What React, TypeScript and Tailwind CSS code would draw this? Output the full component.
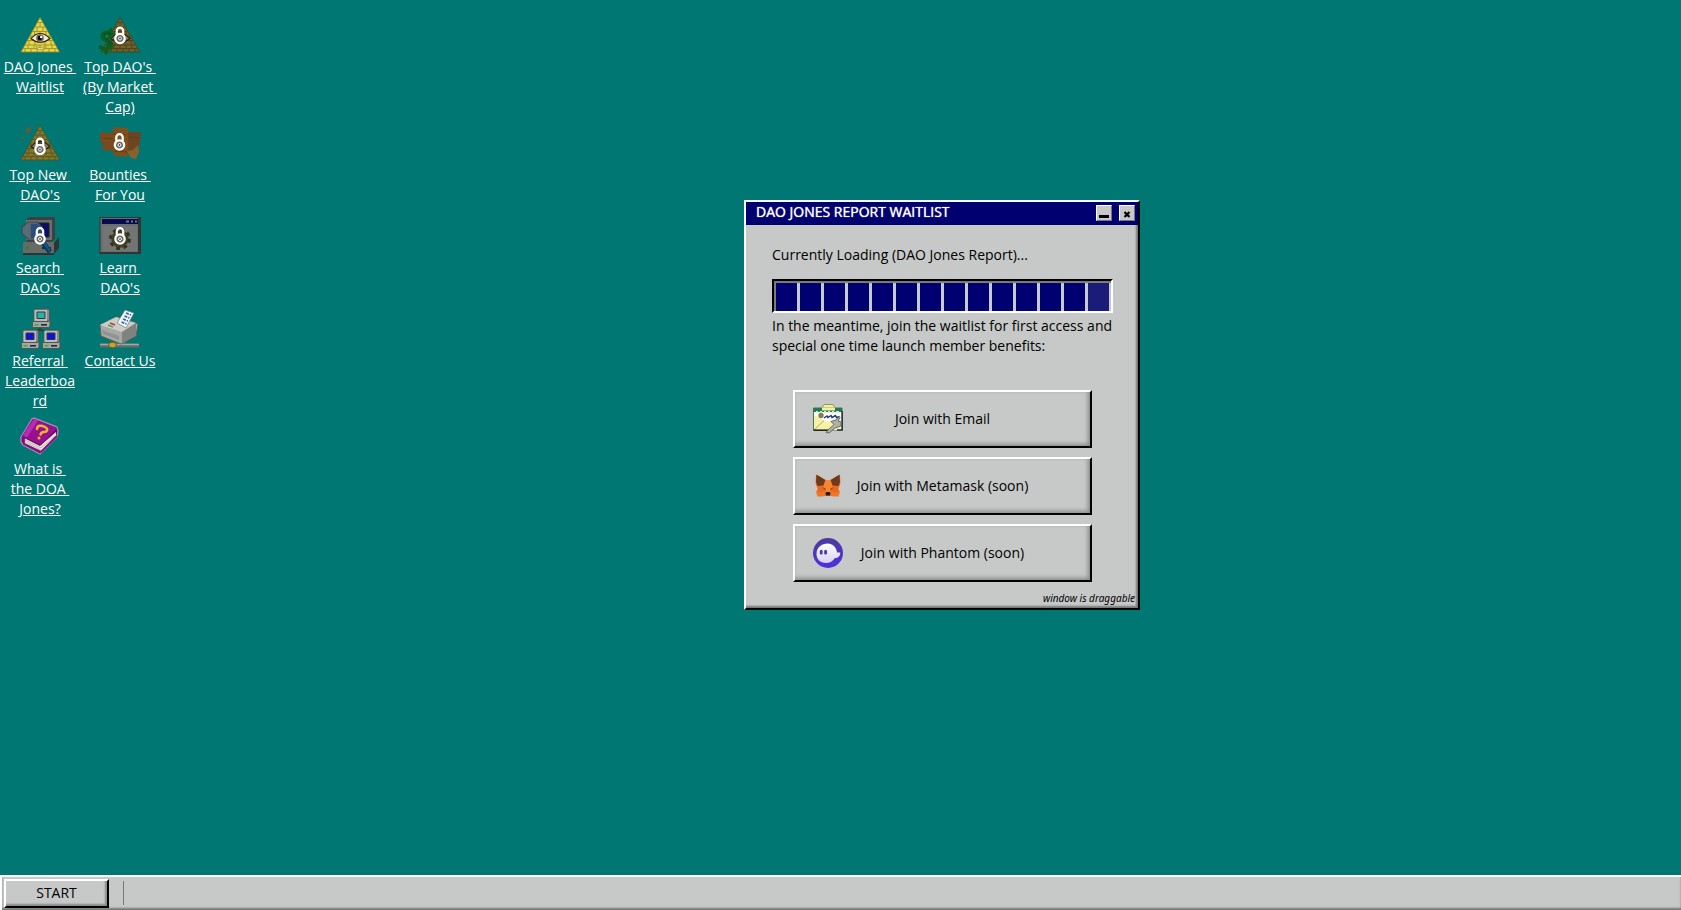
import type { ReactNode } from 'react';

type DesktopItem = { label: string; icon: ReactNode };

function Lock({ cx = 20, cy = 25 }: { cx?: number; cy?: number }) {
  return (
    <g transform={`translate(${cx} ${cy})`}>
      <path d="M-3.2 -3.500V-7.600a3.200 3.200 0 0 1 6.400 0V-3.500" fill="none" stroke="#fff" strokeWidth="2.200" />
      <circle r="4.700" fill="#6b6b64" stroke="#fff" strokeWidth="2.200" />
      <circle r="1.500" fill="#555" stroke="#fff" strokeWidth="1" />
    </g>
  );
}

function Pyramid({ fill, line, dark = false }: { fill: string; line: string; dark?: boolean }) {
  return (
    <g>
      <path d="M20 2.5 39.5 37H1Z" fill={fill} stroke={line} strokeWidth=".8" />
      <path
        d="M17.5 7.5h5M15 12h10M12.5 16.5h15M10 21h20M7.5 25.5h25M5 30h30M3 33.6h34M20 7.5V12M17 12v4.500M23 12v4.500M14.500 16.500v4.500M20 16.500v4.500M26 16.500v4.500M11 21v4.500M29 21v4.500M9 25.500v4.500M15 25.500v4.500M25 25.500v4.500M31 25.500v4.500M8 30v3.600M14 30v3.600M20 30v3.600M26 30v3.600M32 30v3.600M5 33.600V37M11 33.600V37M17 33.600V37M23 33.600V37M29 33.600V37M35 33.600V37"
        stroke={line}
        strokeWidth=".8"
        fill="none"
      />
      <path d="M11 23.500Q20 13.500 30 23.500Q20 31 11 23.500Z" fill={dark ? '#7b766f' : '#f3ead8'} stroke="#29230f" strokeWidth="1.100" />
      <circle cx="20" cy="23" r="3.800" fill={dark ? '#38342d' : '#6a6350'} />
      <circle cx="20" cy="23" r="2.200" fill="#0c0a04" />
      {!dark && <circle cx="21.200" cy="22" r="1.200" fill="#fff" />}
      {!dark && <path d="M16 31.500q5 3 9 0q-3 5-7 2.500Z" fill="#f7eeb8" stroke="#8c7a1f" strokeWidth=".6" />}
    </g>
  );
}

function DeskSvg({ children }: { children: ReactNode }) {
  return (
    <svg className="h-10 w-10 overflow-visible" viewBox="0 0 40 40" aria-hidden="true">
      {children}
    </svg>
  );
}

function MiniComputer({ x, y, screen }: { x: number; y: number; screen: string }) {
  return (
    <g transform={`translate(${x} ${y})`}>
      <path d="M2 1 3.500 0H16l1.500 1v11H2Z" fill="#858987" stroke="#4d5150" strokeWidth=".8" />
      <path d="M2.500 1h12.500v11H2.500Z" fill="#b9bbb8" />
      <path d="M5 3h8v6.500H5Z" fill={screen} stroke="#343838" strokeWidth="1" />
      <path d="M0.500 12.500h16l1.500-1V17l-1.500 1.500H.5Z" fill="#a4a7a3" stroke="#4d5150" strokeWidth=".9" />
      <path d="M9 15.800h6" stroke="#222" strokeWidth="1.500" />
      <path d="M2.500 15.800h4" stroke="#38b14b" strokeWidth="1.700" />
    </g>
  );
}

const items: DesktopItem[] = [
  { label: 'DAO Jones Waitlist', icon: <DeskSvg><Pyramid fill="#e6d84b" line="#938624" /></DeskSvg> },
  {
    label: "Top DAO's (By Market Cap)",
    icon: (
      <DeskSvg>
        <Pyramid fill="#6f612a" line="#463e1d" dark />
        <g fill="none" stroke="#0b5f22" strokeLinecap="round">
          <path d="M12.500 20C10 15.500 2 17 2.500 22C3 26.500 12 25 11.500 30C11 34.500 4 35.500 .5 32" strokeWidth="4" />
          <path d="M11 14.500 6 38" strokeWidth="3" />
        </g>
        <path d="M11 19.500C8 17 4 18.500 4.500 21.500C5 24.500 11 25.500 10 29.500" fill="none" stroke="#0a401b" strokeWidth=".9" />
        <Lock cx={20} cy={23.500} />
      </DeskSvg>
    ),
  },
  {
    label: "Top New DAO's",
    icon: (
      <DeskSvg>
        <Pyramid fill="#81762a" line="#564f1f" dark />
        <path d="m4 8 3-2 1-3 1.500 3 2.500 1-2.500 1.500L8 11 7 8.500ZM1 15l2-1.500 1 1.500-1.500 2ZM11 3l1.500-1 .5 1.500-1 1Z" fill="#75552f" />
        <Lock cx={20} cy={26.500} />
      </DeskSvg>
    ),
  },
  {
    label: 'Bounties For You',
    icon: (
      <DeskSvg>
        <path d="m0 11 3-2 10 1 2 2v16L2 27l1-6-3-3Z" fill="#7a4a1f" />
        <path d="M27 9h13l1 2-1 7-1 5v7l-4 2-8-2Z" fill="#6d4520" />
        <path d="m13 5 2-1 13 1v23l-1 6-13-1-1-5Z" fill="#7f4f20" />
        <path d="m13 11 14 1M3 15l10 1M29 14l10 1M14 28l13 1" stroke="#633c15" strokeWidth="1" fill="none" />
        <path d="m27 28 6-1 5-5 1 7-3 7-5-1Z" fill="#8a612a" />
        <Lock cx={19.500} cy={22} />
      </DeskSvg>
    ),
  },
  {
    label: "Search DAO's",
    icon: (
      <DeskSvg>
        <path d="m7 2 3-1h25v22l-4 3H7Z" fill="#3c4040" />
        <path d="M6 4h26v20H6Z" fill="#6b6f6d" />
        <path d="M10 7h19v14H10Z" fill="#0a0e66" stroke="#222" />
        <path d="M3 27h31l5-6v11l-6 7H3Z" fill="#2f3333" />
        <path d="M3 26h31v11H3Z" fill="#666b68" />
        <path d="M22 32h9" stroke="#252929" strokeWidth="2" />
        <circle cx="7" cy="32" r="1.600" fill="#1c8a28" />
        <path d="M8 6h9l5 5v8l-5 4H8l-6-5v-7Z" fill="#5a6b75" fillOpacity=".9" stroke="#3f4a50" strokeWidth="1.200" />
        <path d="M11 8h6l4 4v7l-3 3h-7Z" fill="#284c7d" />
        <path d="m21 24 9 12" stroke="#093755" strokeWidth="5" />
        <path d="m21 23 9 12" stroke="#0f568c" strokeWidth="2.400" />
        <Lock cx={20} cy={23} />
      </DeskSvg>
    ),
  },
  {
    label: "Learn DAO's",
    icon: (
      <DeskSvg>
        <path d="M-.5 1H41v37H-.5Z" fill="#303434" />
        <path d="M.5 2H38v34H.5Z" fill="#6a6e6d" />
        <path d="M2 3h36v5H2Z" fill="#060a50" />
        <path d="M26 5.500h3m2 0h2m2 0h2" stroke="#777" strokeWidth="2.200" />
        <path d="M3 10h34v25H3Z" fill="#727574" />
        <circle cx="20" cy="23" r="7" fill="#66634a" stroke="#424024" strokeWidth="3.500" />
        <circle cx="20" cy="23" r="9.500" fill="none" stroke="#33331d" strokeWidth="3" strokeDasharray="3.700 3.760" />
        <Lock cx={20} cy={23} />
      </DeskSvg>
    ),
  },
  {
    label: 'Referral Leaderboard',
    icon: (
      <DeskSvg>
        <path d="M20 18v4M10 25l10-5 10 5" stroke="#303b3b" strokeWidth="1.500" fill="none" />
        <MiniComputer x={12} y={0} screen="#22b5a5" />
        <MiniComputer x={1} y={21} screen="#0d12e0" />
        <MiniComputer x={22} y={21} screen="#0d12e0" />
      </DeskSvg>
    ),
  },
  {
    label: 'Contact Us',
    icon: (
      <DeskSvg>
        <path d="M0 36.500h39" stroke="#656b66" strokeWidth="4" />
        <path d="M0 35.500h39" stroke="#a3a8a3" strokeWidth="1.700" />
        <path d="m0 16 16-8 20 6 2 1-2 12L21 35 1 27Z" fill="#a6a9a6" stroke="#5d615e" />
        <path d="m0 16 16-8 20 6-14 9Z" fill="#cbcdc9" />
        <path d="m22 23 14-9v12l-14 9Z" fill="#7e8380" />
        <path d="m2 21 17 6v4L3 25Z" fill="#90948f" />
        <path d="m17 14 8-13 9 3-8 15Z" fill="#f5f7f5" stroke="#6b777d" strokeWidth=".7" />
        <path d="m26 4 5 2m-6.500 1 5 2M23 10l5 2m-6.500 1 5 2" stroke="#2f66b4" strokeWidth="1.800" strokeDasharray="3 1" />
        <path d="m10 14 5 2" stroke="#bf3736" strokeWidth="1.600" />
        <path d="m8 16 5 2" stroke="#4fa555" strokeWidth="1.500" />
        <ellipse cx="12.500" cy="36" rx="4" ry="2.800" fill="#c8a330" stroke="#715e25" />
      </DeskSvg>
    ),
  },
  {
    label: 'What is the DOA Jones?',
    icon: (
      <DeskSvg>
        <path d="m1 20 11-18 2-1 23 9 1 4-1 6-17 17-17-9-2-3Z" fill="#6b0767" stroke="#a989b5" strokeWidth="1.400" />
        <path d="m4 21 16 8 16-14v4L21 34 4 26Z" fill="#ecebdd" />
        <path d="m5 23 16 8 14-12M5 25l16 8" stroke="#aaa69a" strokeWidth=".8" fill="none" />
        <path d="m2 19 11-17 24 9-16 17Z" fill="#97108f" />
        <path d="m3 18 11-16 4 1.500L7 20.500Z" fill="#b92bb3" />
        <path d="m2 20 2 1v6l17 8 16-16" stroke="#8f0c89" strokeWidth="1.800" fill="none" />
        <path d="M17 12c0-4 4-4 8-2c4 2 2 5-1 5c-2 0-3 1-3.500 2.500" fill="none" stroke="#efb32c" strokeWidth="2.400" strokeLinecap="round" />
        <circle cx="19" cy="21" r="1.500" fill="#efb32c" />
      </DeskSvg>
    ),
  },
];

function MailIcon() {
  return (
    <svg className="h-[30px] w-[30px]" viewBox="0 0 30 30" aria-hidden="true">
      <path d="m9 4 2-3.500h9L22 4v4H9Z" fill="#f2f0a1" stroke="#7b8455" strokeWidth=".8" />
      <path d="M.5 4h28.500v22H.5Z" fill="#fff" stroke="#45735d" />
      <path d="M.5 4h28.500v4H.5Z" fill="#247b4c" />
      <path d="M9 3.500h13v3H9Z" fill="#f2f0a1" />
      <path d="M3 8h2m2 0h2m2 0h2m2 0h2m2 0h2m2 0h3" stroke="#d7e8d6" strokeWidth="2" />
      <path d="m1 11 13 7 13-4v12H1Z" fill="#f5f1a5" />
      <path d="m1 26 10-9.500" stroke="#9c9c60" strokeWidth=".8" />
      <path d="M.5 26.200H17" stroke="#1f2720" strokeWidth="1.600" />
      <circle cx="8" cy="11.500" r="2.700" fill="#828050" />
      <path d="m11 14 3-2 1 1.500 3-2 1 2 3.500-2 1 2 3-1" stroke="#253478" strokeWidth="1.500" fill="none" />
      <path d="M29.200 7v19H24" stroke="#27382e" strokeWidth="1.500" fill="none" />
      <path d="m26 12.500-3 3.500-5 1.500 3 3-5 4.500-3 3.500 3 .5 6-5 6-2v-4l-3-1 2-3.500Z" fill="#afb1ad" stroke="#5f625f" strokeWidth=".9" />
    </svg>
  );
}

function FoxIcon() {
  return (
    <svg className="h-[30px] w-[30px]" viewBox="0 0 30 30" aria-hidden="true">
      <path d="m3 4 9.500 5h5L27 4l.5 8-2 6 1.500 3-1.500 4.500H21L18 25h-6l-3 .5H4.500L3 21l1.500-3-2-6Z" fill="#ee7828" />
      <path d="m3.500 3.500 9 5.500-2 5.500-6 .5-1.500-4ZM26.500 3.500l-9 5.500 2 5.500 6 .5 1.500-4Z" fill="#70391c" />
      <path d="m12.500 9-2 6.500 3 5.500h3l3-5.500-2-6.500Z" fill="#f58730" />
      <path d="m5 15.500 5.500-.5 2.500 5.500-8 1Zm20 0-5.500-.5-2.500 5.500 8 1Z" fill="#e9661e" />
      <path d="m9.500 16.500 3 1v1.500Zm11 0-3 1v1.500Z" fill="#7a3414" />
      <path d="m12.500 22 1-1h3l1 1-.5 2.500h-4Z" fill="#211b1a" />
    </svg>
  );
}

function PhantomIcon() {
  return (
    <svg className="h-[30px] w-[30px]" viewBox="0 0 30 30" aria-hidden="true">
      <defs>
        <linearGradient id="phantom" x1="0" y1="0" x2="0" y2="1">
          <stop offset="0" stopColor="#4d3a9f" />
          <stop offset="1" stopColor="#4f30dd" />
        </linearGradient>
        <linearGradient id="ghost" x1="0" y1="0" x2="0" y2="1">
          <stop offset="0" stopColor="#fff" />
          <stop offset="1" stopColor="#d6d0f3" />
        </linearGradient>
      </defs>
      <circle cx="15" cy="15" r="15" fill="url(#phantom)" />
      <path d="M3.500 16C3.500 9.500 9 5.500 14.500 5.500C20 5.500 23.500 9.500 24 14.500h3.200c.3 3.500-2 5.500-5.200 5.500C20 23 17 25 13 25C7 25 3.500 21 3.500 16Z" fill="url(#ghost)" />
      <rect x="6.800" y="12" width="2.800" height="4.600" rx="1" fill="#493aa5" />
      <rect x="11.200" y="12" width="2.800" height="4.600" rx="1" fill="#493aa5" />
    </svg>
  );
}

const joinOptions = [
  { label: 'Join with Email', icon: <MailIcon /> },
  { label: 'Join with Metamask (soon)', icon: <FoxIcon /> },
  { label: 'Join with Phantom (soon)', icon: <PhantomIcon /> },
];

const blocks = Array.from({ length: 14 }, (_, i) => i);

const raised = 'border-2 border-t-white border-l-white border-r-black border-b-black bg-[#c6c9c8]';
const windowControl =
  'flex h-4 w-4 items-end justify-center border border-t-white border-l-white border-r-[#777] border-b-[#777] bg-[#c6c9c8] pb-0.5';

export default function App() {
  return (
    <div className="relative flex min-h-screen flex-col bg-[#007772] font-['Open_Sans','Noto_Sans',sans-serif] text-sm leading-5 text-black">
      <main className="flex-1">
        <nav aria-label="Desktop" className="grid w-40 grid-cols-2 gap-y-1.5 pt-[15px]">
          {items.map((item) => (
            <a key={item.label} href="#" className="flex min-h-[87px] flex-col items-center gap-0.5 text-white">
              {item.icon}
              <span className="w-[75px] text-center break-words whitespace-break-spaces underline">{item.label}</span>
            </a>
          ))}
        </nav>

        <section
          aria-label="DAO Jones Report waitlist"
          className={`absolute top-[200px] left-[744px] w-[396px] ${raised} shadow-[inset_-2px_-2px_2px_#777]`}
        >
          <header className="flex h-[23px] items-center justify-between bg-[#000070] pr-[3px] pb-px pl-2.5 text-white">
            <h1 className="pb-[3px] font-medium [text-shadow:0_0_1px_#fff]">DAO JONES REPORT WAITLIST</h1>
            <div className="flex gap-[7px]">
              <button aria-label="Minimize" className={windowControl}>
                <svg className="h-[3px] w-2.5" viewBox="0 0 10 3" aria-hidden="true"><path d="M0 0h10v3H0Z" /></svg>
              </button>
              <button aria-label="Close" className={windowControl}>
                <svg className="h-[7px] w-2" viewBox="0 0 8 7" aria-hidden="true"><path d="m1.500 1 5 5M6.500 1l-5 5" stroke="#000" strokeWidth="2.200" /></svg>
              </button>
            </div>
          </header>
          <div className="pt-5 pr-[25px] pl-[26px]">
            <p id="loading-label">Currently Loading (DAO Jones Report)...</p>
            <div
              role="progressbar"
              aria-labelledby="loading-label"
              aria-valuenow={96}
              className="mt-[14px] flex h-[34px] gap-[3px] border-2 border-t-black border-l-black border-r-white border-b-white bg-[#c6c9d0] pt-0.5 pr-[2px] pl-0.5 shadow-[inset_2px_2px_1px_#777]"
            >
              {blocks.map((i) => (
                <span key={i} className={i === 13 ? 'flex-1 bg-[#1b1c7a]' : 'flex-1 bg-[#000070]'} />
              ))}
            </div>
            <p className="mt-[3px] whitespace-nowrap">
              In the meantime, join the waitlist for first access and
              <br />
              special one time launch member benefits:
            </p>
          </div>
          <div className="mt-[34px] flex flex-col gap-[9px] pr-[46px] pl-[47px]">
            {joinOptions.map((option) => (
              <button
                key={option.label}
                className={`grid h-[58px] grid-cols-[30px_1fr_30px] items-center px-[18px] ${raised} shadow-[inset_-2px_-2px_4px_#888]`}
              >
                {option.icon}
                <span>{option.label}</span>
              </button>
            ))}
          </div>
          <p className="mt-2 pr-[3px] pb-0.5 text-right font-['Noto_Sans',sans-serif] text-[10px] leading-4 italic">window is draggable</p>
        </section>
      </main>

      <footer className="flex h-[35px] items-center gap-[14px] border-t-2 border-l-2 border-white bg-[#c6c9c8] pb-px pl-0.5 shadow-[inset_0_-2px_2px_#777]">
        <button className={`h-[29px] w-[105px] ${raised} shadow-[inset_-2px_-2px_2px_#888]`}>START</button>
        <div className="h-6 w-px bg-[#777]" />
      </footer>
    </div>
  );
}
